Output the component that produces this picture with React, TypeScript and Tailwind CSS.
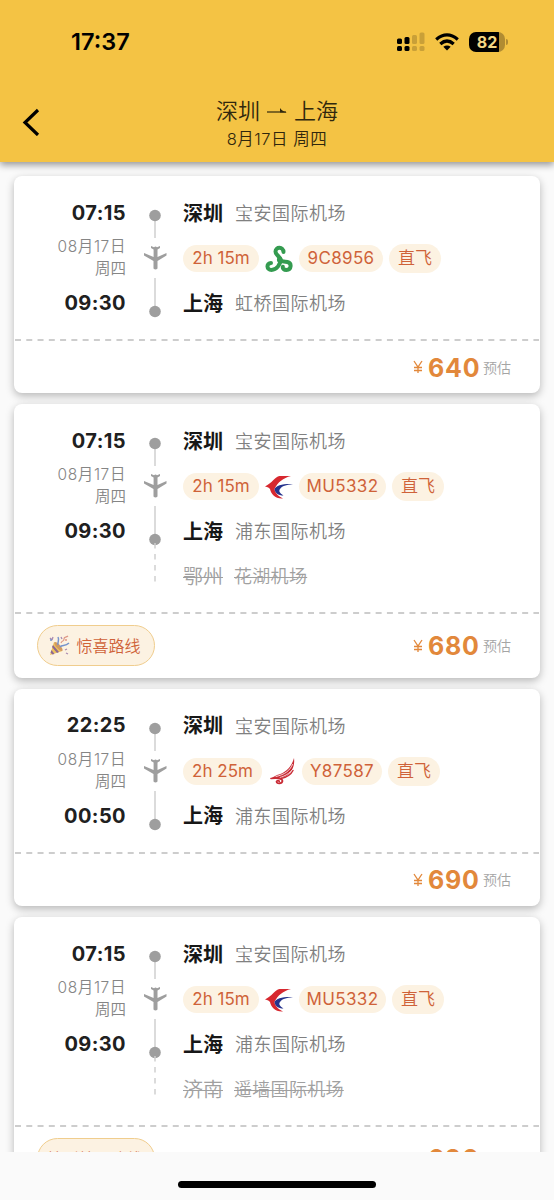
import React from 'react';

const flights = [
  { dep: '07:15', arr: '09:30', dur: '2h 15m', durW: 'w-[76px]', logo: 'spring', no: '9C8956', noW: 'w-[84px]', from: '宝安国际机场', to: '虹桥国际机场', price: '640' },
  { dep: '07:15', arr: '09:30', dur: '2h 15m', durW: 'w-[76px]', logo: 'eastern', no: 'MU5332', noW: 'w-[87px]', from: '宝安国际机场', to: '浦东国际机场', extra: ['鄂州', '花湖机场'], tag: '惊喜路线', emoji: true, price: '680' },
  { dep: '22:25', arr: '00:50', dur: '2h 25m', durW: 'w-[79px]', logo: 'suparna', no: 'Y87587', noW: 'w-[80px]', from: '宝安国际机场', to: '浦东国际机场', price: '690' },
  { dep: '07:15', arr: '09:30', dur: '2h 15m', durW: 'w-[76px]', logo: 'eastern', no: 'MU5332', noW: 'w-[87px]', from: '宝安国际机场', to: '浦东国际机场', extra: ['济南', '遥墙国际机场'], tag: '特别特价路线', emoji: false, price: '690' },
];

function Logo({ kind }: { kind: string }) {
  if (kind === 'spring')
    return (
      <svg viewBox="0 0 28 28" className="h-7 w-7" fill="none" stroke="#349b50" strokeWidth="4" strokeLinecap="round">
        <path d="M18.500 7C18.500 1.500 10.500 1.500 10.500 6.500C10.500 10 14.500 11 15.500 14.500" />
        <path d="M15.500 14C16 19 11.500 25 6.500 25C1.200 25 1.200 18 6 18" />
        <path d="M14 14.500C17 17.500 20 16.500 22.500 17C27 18 26.500 25 21.500 25C18.800 25 17.500 23.500 17.800 21.800" />
        <circle cx="14.500" cy="15" r="1.500" fill="#349b50" strokeWidth="2" />
      </svg>
    );
  if (kind === 'eastern')
    return (
      <svg viewBox="0 0 28 28" className="h-7 w-7">
        <path d="M26 3H14.500C10 4 7 10 0 13.500C3 14 4 15 5 16C6 21 10 26 18 25.500C13 23 10 20 9.500 16C13 9 18 5 26 3Z" fill="#d7282f" />
        <path d="M28 11C18 10.500 11 12.500 9.500 16C10 20 13 22.500 18.500 22.500C14.500 20 13.500 18 15 16C17 13 21 12 28 11Z" fill="#25338d" />
      </svg>
    );
  return (
    <svg viewBox="0 0 28 28" className="h-7 w-7" fill="none" stroke="#c92b35" strokeLinecap="round">
      <path d="M26 1C24 9 18 16 9 18L2.500 21.500C9 22 16 21 20 18C24 14 27 9 26 1Z" fill="#c92b35" stroke="none" />
      <path d="M24.500 7.500C22 13.500 17 17.500 8 19.500M25 12C21 17 17 19 12 20.500" stroke="#fff" strokeWidth=".8" />
      <path d="M25 13.500C23 17.500 18 20.500 13 21.500" strokeWidth="1.400" />
      <path d="M3 21.500C8 21 14.500 21 14.500 24C14 27 8.500 27 8.500 24.600C9 23.200 11 23.400 11.300 24.400" strokeWidth="1.700" />
    </svg>
  );
}

function Party() {
  return (
    <svg viewBox="0 0 22 22" className="h-[22px] w-[22px]">
      <path d="M2 20L6 7C9 8 13 12 14.500 16Z" fill="#edc35e" />
      <path d="M5 10l6 7-2 1-5-6zM3.500 15l3 4-2 .5-2-2z" fill="#8d6793" />
      <ellipse cx="10.500" cy="11.500" rx="2" ry="5.700" transform="rotate(-42 10.500 11.500)" fill="#d39a61" />
      <path d="M10 10C9 7 12 6 10 2M12 12C14 9 17 12 21 8" fill="none" stroke="#7693cc" strokeWidth="1.500" />
      <path d="M13 8c1-3 3-1 3-4s2-1 4-3" fill="none" stroke="#de9785" strokeWidth="1.200" />
      <path d="M2 3l2 2M5 2l-1 3M17 15l2-1M18 18l2 1M13 2l1 2" stroke="#aa8ab1" strokeWidth="1.300" />
      <circle cx="18" cy="5" r="1" fill="#e39487" /><circle cx="3" cy="5" r="1" fill="#7796c9" />
    </svg>
  );
}

function Route({ extra }: { extra: boolean }) {
  return (
    <svg viewBox="0 0 26 184" className="h-[184px] w-[26px] shrink-0" fill="#9e9e9e">
      <path d="M13 40V62M13 102V131" stroke="#d0d0d0" strokeWidth="1.500" />
      <circle cx="13" cy="39.500" r="5.800" /><circle cx="13" cy="135.500" r="5.800" />
      {extra && <path d="M13 139V180" stroke="#cfcfcf" strokeWidth="1.500" strokeDasharray="5.500 5.500" />}
      <path d="M9 70L12 71.200Q13.500 69.800 15 71.200L18 70V72L15.500 73.500V81L24.500 77V79.500L15.500 85V92.500Q13.500 94.500 11.500 92.500V85L2 79.500V77L11.600 81V73.500L9 72Z" />
    </svg>
  );
}

function Card({ f }: { f: (typeof flights)[number] }) {
  return (
    <article className={`mx-[14px] flex shrink-0 flex-col rounded-lg bg-white shadow-[0_3px_8px_rgba(0,0,0,0.27)] ${f.extra ? 'h-[273.5px]' : 'h-[217px]'}`}>
      <div className={`flex w-full shrink-0 overflow-hidden ${f.extra ? 'h-[208px]' : 'h-[163px]'}`}>
        <div className="flex w-[112px] shrink-0 flex-col items-end pt-[24.5px]">
          <div className="h-6 text-[20px] leading-6 font-bold tracking-[0.4px] text-[#202020]">{f.dep}</div>
          <div className="mt-[11.5px] h-[22px] text-[15.5px] leading-[22px] font-[350] tracking-[0.6px] text-[#858585]">08月17日</div>
          <div className="h-[22px] text-[15.5px] leading-[22px] font-[350] text-[#858585]">周四</div>
          <div className="mt-[11px] h-6 text-[20px] leading-6 font-bold tracking-[0.4px] text-[#202020]">{f.arr}</div>
        </div>
        <div className="ml-4"><Route extra={!!f.extra} /></div>
        <div className="ml-[15px] flex flex-col pt-[22.5px]">
          <div className="flex h-[30px] items-center whitespace-nowrap">
            <span className="w-[52px] text-[20px] font-bold text-[#171717]">深圳</span>
            <span className="text-[18px] font-[350] tracking-[0.5px] text-[#808080]">{f.from}</span>
          </div>
          <div className="my-[15px] flex h-[30px] items-center text-[17px] whitespace-nowrap text-[#cf6239]">
            <span className={`flex h-[27px] items-center justify-center rounded-full bg-[#fcf2e2] pt-px ${f.durW}`}>{f.dur}</span>
            <span className="mx-[6px]"><Logo kind={f.logo} /></span>
            <span className={`flex h-[27px] items-center justify-center rounded-full bg-[#fcf2e2] pt-px tracking-[0.35px] ${f.noW}`}>{f.no}</span>
            <span className="ml-[6px] flex h-[29px] w-[52px] items-center justify-center rounded-full bg-[#fcf2e2] pt-px font-[350]">直飞</span>
          </div>
          <div className="flex h-[30px] items-center whitespace-nowrap">
            <span className="w-[52px] text-[20px] font-bold text-[#171717]">上海</span>
            <span className="text-[18px] font-[350] tracking-[0.5px] text-[#808080]">{f.to}</span>
          </div>
          {f.extra && (
            <div className="mt-[15px] flex h-[30px] items-center font-[350] whitespace-nowrap text-[#a0a0a0]">
              <span className="w-[51px] text-[20px]"><s className="decoration-1">{f.extra[0]}</s></span>
              <s className="text-[18px] tracking-[0.3px] decoration-1">{f.extra[1]}</s>
            </div>
          )}
        </div>
      </div>
      <svg className="h-[2px] w-full shrink-0"><path d="M1 1H525" stroke="#bdbdbd" strokeWidth="1.500" strokeDasharray="6 5.270" /></svg>
      <div className="flex flex-1 items-center pr-[29px] pl-[23px]">
        {f.tag && (
          <div className="flex h-[41px] w-[118px] items-center justify-center gap-[6px] rounded-full border-[1.5px] border-[#f0cd8d] bg-[#fcf2e2] pr-[3px] text-[16px] font-[350] whitespace-nowrap text-[#cf6239]">
            {f.emoji && <Party />}{f.tag}
          </div>
        )}
        <div className="ml-auto flex items-center text-[#e2883b]">
          <svg viewBox="0 0 10 14" className="mr-[5px] h-[14px] w-[10px]" fill="none" stroke="currentColor" strokeWidth="1.300"><path d="M1 1L5 7L9 1M5 7V13M1 7.500H9M1 10.500H9" /></svg>
          <span className="w-[55px] pt-px text-[25px] leading-8 font-bold tracking-[0.8px]">{f.price}</span>
          <span className="text-[14px] font-[350] text-[#a5a5a5]">预估</span>
        </div>
      </div>
    </article>
  );
}

export default function App() {
  return (
    <div className="flex h-[1200px] w-[554px] flex-col overflow-hidden bg-[#fafafa] font-['Inter','Noto_Sans_CJK_SC',sans-serif]">
      <header className="relative z-10 flex h-[162px] shrink-0 flex-col bg-[#f4c344] shadow-[0_3px_7px_rgba(0,0,0,0.4)]">
        <div className="flex h-[83px] items-center pr-[46px] pl-[71px] text-black">
          <span className="pt-px text-[23.5px] font-semibold">17:37</span>
          <svg viewBox="0 0 28 20" className="ml-auto h-5 w-7">
            <rect y="6.500" width="5" height="5.500" rx="1.500" /><rect x="7.500" y="5" width="5" height="7" rx="1.500" />
            <rect y="14" width="5" height="5" rx="1.500" /><rect x="7.500" y="14" width="5" height="5" rx="1.500" />
            <g fill="#c9a038"><rect x="15" y="3" width="5" height="9" rx="1.500" /><rect x="22.500" y=".5" width="5" height="11.500" rx="1.500" /><rect x="15" y="14" width="5" height="5" rx="1.500" /><rect x="22.500" y="14" width="5" height="5" rx="1.500" /></g>
          </svg>
          <svg viewBox="0 0 24 18" className="ml-[10px] h-[18px] w-6" fill="none" stroke="black" strokeWidth="3.200"><path d="M1.200 6.500Q12-2.700 22.800 6.500M5.300 11Q12 5 18.700 11" /><path d="M8.300 13.800Q12 11 15.700 13.800L12 17.500Z" fill="black" stroke="none" /></svg>
          <div className="ml-[10px] flex items-center">
            <span className="flex h-5 w-9 items-center justify-center rounded-[7px] bg-[linear-gradient(90deg,#000_84%,#b18c32_84%)] text-[16px] font-bold text-[#f4d784]">82</span>
            <span className="ml-px h-[6px] w-[2px] rounded-r-full bg-[#b18c32]" />
          </div>
        </div>
        <div className="grid h-[79px] grid-cols-[60px_1fr_60px]">
          <svg viewBox="0 0 20 28" className="mt-[25px] ml-[21px] h-7 w-5" fill="none" stroke="black" strokeWidth="3.200"><path d="M17 2L4 14.500L17 27" /></svg>
          <div className="flex flex-col items-center text-[#30270d]">
            <div className="mt-[12px] flex h-[33px] items-center text-[22px] font-[350]">
              <span>深圳</span>
              <svg viewBox="0 0 22 10" className="mx-[6px] h-[10px] w-[22px]"><path d="M1 5H20" stroke="currentColor" strokeWidth="1.200" /><path d="M14 1Q16 4 21 5.500H14Z" fill="currentColor" /></svg>
              <span>上海</span>
            </div>
            <div className="h-[22px] text-[16.5px] leading-[22px] font-[350] tracking-[0.5px]">8月17日 周四</div>
          </div>
        </div>
      </header>
      <main className="flex h-[990px] shrink-0 flex-col gap-[11.2px] overflow-hidden pt-[14px]">
        {flights.map((f, i) => <Card key={i} f={f} />)}
      </main>
      <footer className="flex flex-1 items-end justify-center bg-[#fafafa] pb-[12px]"><div className="h-[7px] w-[198px] rounded-full bg-black" /></footer>
    </div>
  );
}
